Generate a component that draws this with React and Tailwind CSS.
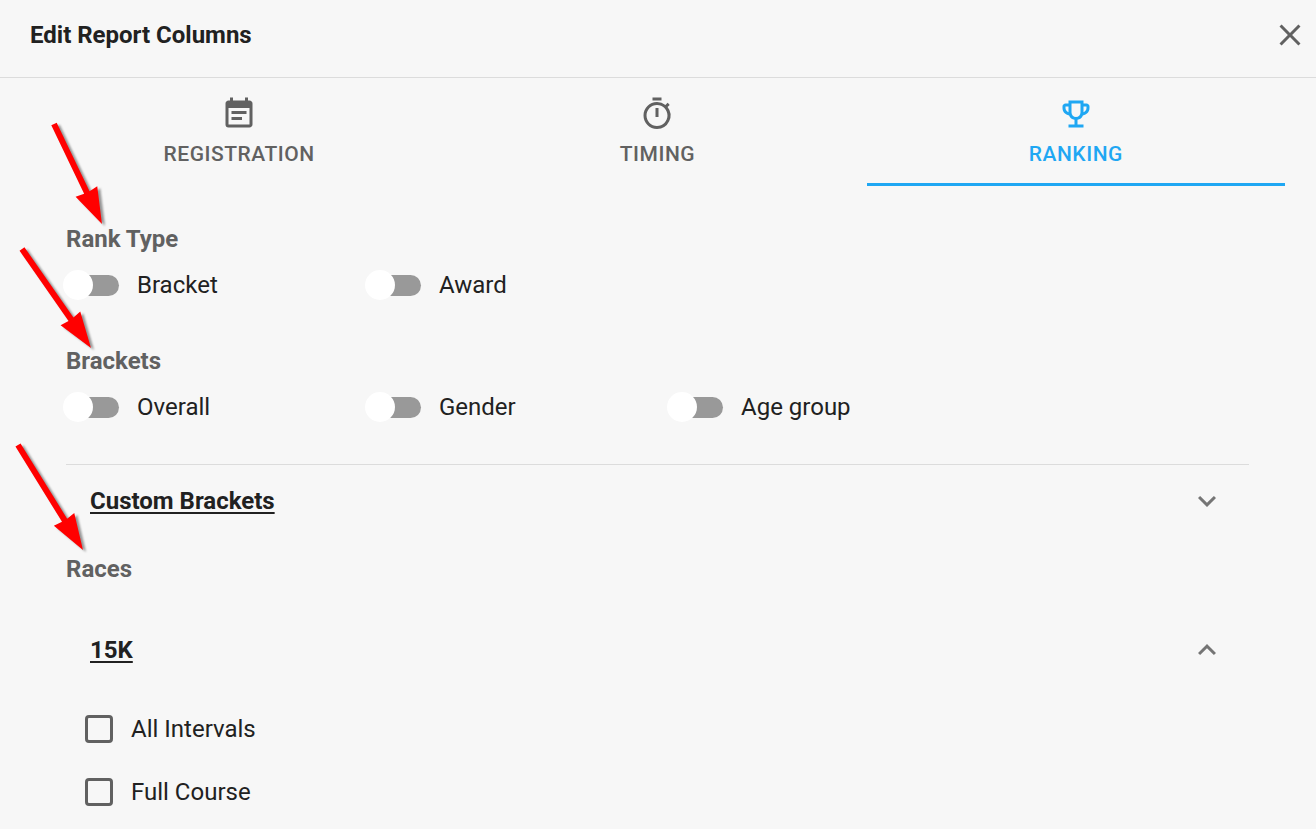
import React, { useState } from "react";
import {
  MdClose,
  MdEventNote,
  MdExpandLess,
  MdExpandMore,
  MdOutlineEmojiEvents,
  MdOutlineTimer,
} from "react-icons/md";

const tabs = [
  { id: "registration", label: "Registration", icon: MdEventNote },
  { id: "timing", label: "Timing", icon: MdOutlineTimer },
  { id: "ranking", label: "Ranking", icon: MdOutlineEmojiEvents },
];

const rankTypes = ["Bracket", "Award"];
const brackets = ["Overall", "Gender", "Age group"];
const intervals = ["All Intervals", "Full Course"];

const Toggle = ({ label }) => (
  <label className="flex h-9 cursor-pointer items-center gap-[18px]">
    <span className="relative flex h-[30px] w-14 items-center">
      <input type="checkbox" role="switch" className="peer sr-only" />
      <span className="ml-1 h-[21px] grow rounded-full bg-[#999999] peer-checked:bg-[#8fd0f7]" />
      <span className="absolute left-0 size-[30px] rounded-full bg-white transition-transform peer-checked:translate-x-[26px] peer-checked:bg-[#1fa7f3]" />
    </span>
    {label}
  </label>
);

const ToggleGroup = ({ title, options }) => (
  <section>
    <h2 className="font-bold leading-9 text-[#616161]">{title}</h2>
    <div className="-mr-[22px] -ml-[3px] mt-[10px] grid grid-cols-4">
      {options.map((option) => (
        <Toggle key={option} label={option} />
      ))}
    </div>
  </section>
);

const Accordion = ({ title, defaultOpen = false, children }) => {
  const [open, setOpen] = useState(defaultOpen);
  const Chevron = open ? MdExpandLess : MdExpandMore;

  return (
    <div>
      <button
        type="button"
        aria-expanded={open}
        onClick={() => setOpen(!open)}
        className="flex h-[72px] w-full cursor-pointer items-center justify-between px-6"
      >
        <span className="font-bold underline decoration-2 underline-offset-3">
          {title}
        </span>
        <Chevron className="size-9 text-[#757575]" />
      </button>
      {open && children}
    </div>
  );
};

const Checkbox = ({ label }) => (
  <label className="flex h-[63px] cursor-pointer items-center gap-[18px]">
    <input
      type="checkbox"
      className="size-7 appearance-none rounded-sm border-3 border-[#616161] checked:border-[#1fa7f3] checked:bg-[#1fa7f3]"
    />
    {label}
  </label>
);

// Red pointer with a soft shadow, drawn from the tail to the tip
const Arrow = ({ className, tail, tip }) => {
  const angle = Math.atan2(tip[1] - tail[1], tip[0] - tail[0]);
  const length = Math.hypot(tip[0] - tail[0], tip[1] - tail[1]);
  const neck = length - 35;

  return (
    <svg
      width="100"
      height="120"
      aria-hidden="true"
      className={`pointer-events-none absolute overflow-visible drop-shadow-[3px_2px_1px_rgba(0,0,0,0.4)] ${className}`}
    >
      <polygon
        fill="#ff0000"
        points={`0,-3 ${neck},-3 ${neck - 1},-12 ${length},0 ${neck - 1},12 ${neck},3 0,3`}
        transform={`translate(${tail[0]} ${tail[1]}) rotate(${(angle * 180) / Math.PI})`}
      />
    </svg>
  );
};

const App = () => {
  const [activeTab, setActiveTab] = useState("ranking");

  return (
    <div className="relative min-h-screen bg-[#f7f7f7] font-['Roboto',sans-serif] text-2xl text-[#212121]">
      <header className="flex items-center justify-between border-b border-[#dcdcdc] pt-[17px] pr-2 pb-6 pl-[30px]">
        <h1 className="font-bold">Edit Report Columns</h1>
        <button type="button" aria-label="Close" className="cursor-pointer">
          <MdClose className="size-9 text-[#616161]" />
        </button>
      </header>

      <div role="tablist" className="mr-[31px] ml-[30px] grid grid-cols-3">
        {tabs.map(({ id, label, icon: Icon }) => (
          <button
            key={id}
            type="button"
            role="tab"
            aria-selected={activeTab === id}
            onClick={() => setActiveTab(id)}
            className={`flex h-[108px] cursor-pointer flex-col items-center gap-1.5 border-b-3 pt-[18px] text-[21px] leading-8 font-medium tracking-wide uppercase ${
              activeTab === id
                ? "border-[#1fa7f3] text-[#1fa7f3]"
                : "border-transparent text-[#616161]"
            }`}
          >
            <Icon className="size-9" />
            {label}
          </button>
        ))}
      </div>

      <main className="mr-[67px] ml-[66px] pt-[35px]">
        <div className="grid gap-10">
          <ToggleGroup title="Rank Type" options={rankTypes} />
          <ToggleGroup title="Brackets" options={brackets} />
        </div>
        <div className="mt-[39px] border-t border-[#dcdcdc]">
          <Accordion title="Custom Brackets" />
        </div>
        <h2 className="mt-[14px] mb-[27px] font-bold leading-9 text-[#616161]">
          Races
        </h2>
        <Accordion title="15K" defaultOpen>
          <div className="mt-[11px] pl-[19px]">
            {intervals.map((interval) => (
              <Checkbox key={interval} label={interval} />
            ))}
          </div>
        </Accordion>
      </main>

      <Arrow className="top-[120px] left-[50px]" tail={[4, 4]} tip={[52, 104]} />
      <Arrow className="top-[245px] left-[18px]" tail={[4, 4]} tip={[73, 103]} />
      <Arrow className="top-[441px] left-[14px]" tail={[4, 4]} tip={[69, 109]} />
    </div>
  );
};

export default App;
